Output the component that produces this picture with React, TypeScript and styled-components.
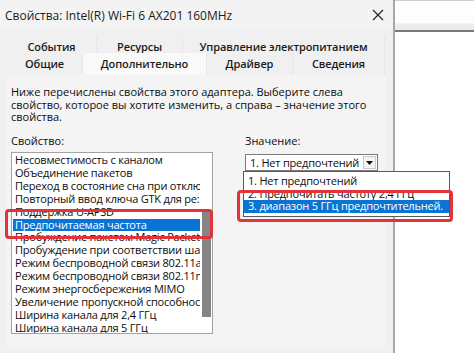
import React from 'react';
import styled, { createGlobalStyle } from 'styled-components';

const GlobalStyle = createGlobalStyle`
  body {
    margin: 0;
    background: #fff;
    font-family: "Open Sans", "Noto Sans", "Liberation Sans", sans-serif;
    color: #0d0d0d;
  }
`;

const Page = styled.div`
  position: relative;
  display: flex;
  width: 474px;
  height: 353px;
  overflow: hidden;
`;

const Dialog = styled.div`
  width: 393px;
  flex: none;
  background: #f0f0f0;
  display: flex;
  flex-direction: column;
`;

const TitleBar = styled.div`
  height: 30px;
  display: flex;
  align-items: center;
  justify-content: space-between;
  padding: 0 9px 0 5px;
  font-size: 12px;
  color: #1a1a1a;
  background: #f3f3f3;
`;

const TabStrip = styled.div`
  margin: 7px 8px 0 7px;
`;

const TabRow = styled.div<{ $cols: string; $h: number }>`
  display: grid;
  grid-template-columns: ${(p) => p.$cols};
  height: ${(p) => p.$h}px;
`;

const Tab = styled.div<{ $active?: boolean; $shift: number }>`
  display: flex;
  align-items: center;
  justify-content: center;
  padding-top: ${(p) => Math.max(p.$shift, 0)}px;
  padding-bottom: ${(p) => Math.max(-p.$shift, 0)}px;
  font-size: 11px;
  font-weight: 600;
  letter-spacing: -0.1px;
  color: #1b1b1b;
  background: ${(p) => (p.$active ? '#f9f9f9' : 'transparent')};
  border-right: 1px solid #e6e6e6;
  white-space: nowrap;
`;

const Panel = styled.div`
  margin: 0 8px 0 7px;
  height: 273px;
  background: #f4f4f4;
  padding: 11px 4px 0 4px;
  box-sizing: border-box;
`;

const Description = styled.div`
  font-size: 11px;
  line-height: 12.7px;
  font-weight: 500;
  white-space: nowrap;
`;

const Columns = styled.div`
  display: flex;
  margin-top: 10px;
`;

const Column = styled.div<{ $w?: number; $ml?: number }>`
  width: ${(p) => (p.$w ? `${p.$w}px` : 'auto')};
  margin-left: ${(p) => p.$ml ?? 0}px;
  display: flex;
  flex-direction: column;
`;

const Label = styled.div`
  font-size: 11px;
  line-height: 13px;
  font-weight: 500;
  margin-bottom: 5px;
`;

const ListBox = styled.div`
  height: 182px;
  border: 1px solid #a3a3a3;
  background: #fff;
  display: flex;
  box-sizing: border-box;
`;

const Items = styled.div`
  flex: 1;
  overflow: hidden;
  padding-top: 1px;
`;

const Item = styled.div<{ $selected?: boolean }>`
  height: 12.9px;
  line-height: 12.9px;
  margin: 0 1px;
  padding-left: 2px;
  font-size: 11px;
  font-weight: 500;
  letter-spacing: -0.2px;
  white-space: nowrap;
  overflow: hidden;
  background: ${(p) => (p.$selected ? '#0a74d4' : 'transparent')};
  color: ${(p) => (p.$selected ? '#fff' : '#0d0d0d')};
`;

const ScrollTrack = styled.div`
  width: 11px;
  padding-left: 1px;
  box-sizing: border-box;
`;

const Thumb = styled.div<{ $top: number; $h: number }>`
  margin-top: ${(p) => p.$top}px;
  height: ${(p) => p.$h}px;
  width: 9px;
  background: #858585;
`;

const SelectWrap = styled.div`
  position: relative;
  margin-top: 2px;
  width: 133px;
`;

const SelectBox = styled.div`
  height: 17px;
  border: 1px solid #7a7a7a;
  background: #fff;
  display: flex;
  align-items: center;
  box-sizing: border-box;
  padding-left: 4px;
  font-size: 11px;
  font-weight: 500;
  letter-spacing: -0.2px;
`;

const SelectText = styled.span`
  flex: 1;
  white-space: nowrap;
`;

const ArrowButton = styled.div`
  width: 13px;
  height: 13px;
  margin-right: 1px;
  border: 1px solid #c8c8c8;
  box-sizing: border-box;
  background: #f4f4f4;
  display: flex;
  align-items: center;
  justify-content: center;
`;

const DropList = styled.div`
  position: absolute;
  top: 17px;
  left: -2px;
  width: 207px;
  height: 46px;
  border: 1px solid #5a5a5a;
  background: #fff;
  box-sizing: border-box;
  padding-top: 3px;
  z-index: 2;
`;

const DropItem = styled.div<{ $selected?: boolean }>`
  height: 12.5px;
  line-height: 12.5px;
  padding-left: 4px;
  font-size: 11px;
  font-weight: 500;
  letter-spacing: -0.2px;
  white-space: nowrap;
  overflow: hidden;
  background: ${(p) => (p.$selected ? '#0a74d4' : 'transparent')};
  color: ${(p) => (p.$selected ? '#fff' : '#0d0d0d')};
`;

const Highlight = styled.div<{ $x: number; $y: number; $w: number; $h: number }>`
  position: absolute;
  left: ${(p) => p.$x}px;
  top: ${(p) => p.$y}px;
  width: ${(p) => p.$w}px;
  height: ${(p) => p.$h}px;
  border: 3px solid #e2323a;
  border-radius: 4px;
  box-sizing: border-box;
  z-index: 3;
`;

const RightPane = styled.div`
  flex: 1;
  border-left: 2px solid #a8a8a8;
  background: #fff;
`;

const TopStrip = styled.div`
  height: 32px;
  border-top: 1px solid #cfcfcf;
  border-bottom: 2px solid #7a7a7a;
  background: linear-gradient(#ffffff 0, #fdfdfd 22px, #ececec 23px, #ececec 29px);
  box-sizing: border-box;
`;

const CloseIcon = () => (
  <svg width="12" height="12" viewBox="0 0 12 12">
    <path d="M1 1 L11 11 M11 1 L1 11" stroke="#222" strokeWidth="1.2" fill="none" />
  </svg>
);

const properties = [
  'Несовместимость с каналом',
  'Объединение пакетов',
  'Переход в состояние сна при отключении',
  'Повторный ввод ключа GTK для ре:',
  'Поддержка U-APSD',
  'Предпочитаемая частота',
  'Пробуждение пакетом Magic Packet',
  'Пробуждение при соответствии шаблону',
  'Режим беспроводной связи 802.11a',
  'Режим беспроводной связи 802.11n',
  'Режим энергосбережения MIMO',
  'Увеличение пропускной способности',
  'Ширина канала для 2,4 ГГц',
  'Ширина канала для 5 ГГц',
];

const values = [
  '1. Нет предпочтений',
  '2. Предпочитать частоту 2,4 ГГц',
  '3. диапазон 5 ГГц предпочтительней.',
];

export default function App() {
  return (
    <Page>
      <GlobalStyle />
      <Dialog>
        <TitleBar>
          <span>Свойства: Intel(R) Wi-Fi 6 AX201 160MHz</span>
          <CloseIcon />
        </TitleBar>
        <TabStrip>
          <TabRow $cols="90px 86px 1fr" $h={16}>
            <Tab $shift={2}>События</Tab>
            <Tab $shift={2}>Ресурсы</Tab>
            <Tab $shift={2}>Управление электропитанием</Tab>
          </TabRow>
          <TabRow $cols="76px 124px 86px 1fr" $h={22}>
            <Tab $shift={-1}>Общие</Tab>
            <Tab $shift={-1} $active>Дополнительно</Tab>
            <Tab $shift={-1}>Драйвер</Tab>
            <Tab $shift={-1}>Сведения</Tab>
          </TabRow>
        </TabStrip>
        <Panel>
          <Description>
            Ниже перечислены свойства этого адаптера. Выберите слева
            <br />
            свойство, которое вы хотите изменить, а справа – значение этого
            <br />
            свойства.
          </Description>
          <Columns>
            <Column $w={202}>
              <Label>Свойство:</Label>
              <ListBox>
                <Items>
                  {properties.map((p) => (
                    <Item key={p} $selected={p === 'Предпочитаемая частота'}>
                      {p}
                    </Item>
                  ))}
                </Items>
                <ScrollTrack>
                  <Thumb $top={59} $h={105} />
                </ScrollTrack>
              </ListBox>
            </Column>
            <Column $ml={32}>
              <Label>Значение:</Label>
              <SelectWrap>
                <SelectBox>
                  <SelectText>1. Нет предпочтений</SelectText>
                  <ArrowButton>
                    <svg width="7" height="4" viewBox="0 0 7 4">
                      <path d="M0 0 H7 L3.5 4 Z" fill="#111" />
                    </svg>
                  </ArrowButton>
                </SelectBox>
                <DropList>
                  {values.map((v, i) => (
                    <DropItem key={v} $selected={i === 2}>
                      {v}
                    </DropItem>
                  ))}
                </DropList>
              </SelectWrap>
            </Column>
          </Columns>
        </Panel>
      </Dialog>
      <RightPane>
        <TopStrip />
      </RightPane>
      <Highlight $x={5} $y={209} $w={208} $h={30} />
      <Highlight $x={237} $y={190} $w={216} $h={32} />
    </Page>
  );
}
